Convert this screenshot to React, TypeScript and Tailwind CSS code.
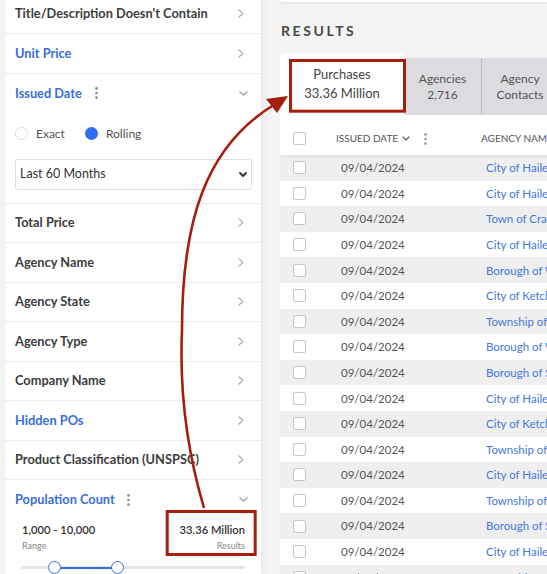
import React from "react";

function ChevronRight() {
  return (
    <svg width="6" height="9" viewBox="0 0 6 9" className="shrink-0">
      <path d="M1 1 L4.8 4.5 L1 8" fill="none" stroke="#b3b3b3" strokeWidth="1.4" strokeLinecap="round" strokeLinejoin="round" />
    </svg>
  );
}

function ChevronDownThin() {
  return (
    <svg width="9" height="5" viewBox="0 0 9 5" className="shrink-0">
      <path d="M0.8 0.8 L4.5 4.2 L8.2 0.8" fill="none" stroke="#a0a0a0" strokeWidth="1.2" strokeLinecap="round" strokeLinejoin="round" />
    </svg>
  );
}

function ChevronDownBold() {
  return (
    <svg width="8" height="5" viewBox="0 0 8 5" className="shrink-0">
      <path d="M1 1 L4 4 L7 1" fill="none" stroke="#333" strokeWidth="1.9" strokeLinecap="round" strokeLinejoin="round" />
    </svg>
  );
}

function Kebab({ color = "#8a8a8a" }: { color?: string }) {
  return (
    <svg width="3" height="12" viewBox="0 0 3 12" className="shrink-0">
      <circle cx="1.5" cy="1.4" r="1.3" fill={color} />
      <circle cx="1.5" cy="6" r="1.3" fill={color} />
      <circle cx="1.5" cy="10.6" r="1.3" fill={color} />
    </svg>
  );
}

function FilterRow({ label, blue }: { label: string; blue?: boolean }) {
  return (
    <div className="h-[39.5px] border-b border-[#ececec] flex items-center justify-between pl-[10px] pr-[17px]">
      <span className={blue ? "text-[12.8px] font-bold text-[#3a6ed8]" : "text-[12.8px] font-bold text-[#3d3d3d]"}>{label}</span>
      <ChevronRight />
    </div>
  );
}

function IssuedDate() {
  return (
    <div className="border-b border-[#ececec] pb-[13px]">
      <div className="h-[39.5px] flex items-center pl-[10px] pr-[13px]">
        <span className="text-[12.8px] font-bold text-[#3a6ed8]">Issued Date</span>
        <span className="ml-[13px] flex"><Kebab /></span>
        <span className="ml-auto flex"><ChevronDownThin /></span>
      </div>
      <div className="mt-[12px] h-[17px] flex items-center px-[10px] text-[12px] text-[#555]">
        <span className="w-[13px] h-[13px] rounded-full border border-[#dcdcdc] bg-white shrink-0" />
        <span className="ml-[8px]">Exact</span>
        <span className="ml-[20px] w-[13px] h-[13px] rounded-full bg-[#2f6df5] shrink-0" />
        <span className="ml-[8px]">Rolling</span>
      </div>
      <div className="mt-[16.5px] ml-[10px] w-[237px] h-[31px] border border-[#dedede] rounded-[3px] flex items-center justify-between pl-[4px] pr-[4px] text-[12.5px] text-[#333]">
        <span>Last 60 Months</span>
        <ChevronDownBold />
      </div>
    </div>
  );
}

function PopulationCount() {
  return (
    <div>
      <div className="h-[39.5px] flex items-center pl-[10px] pr-[13px]">
        <span className="text-[12.8px] font-bold text-[#3a6ed8]">Population Count</span>
        <span className="ml-[12px] flex"><Kebab /></span>
        <span className="ml-auto flex"><ChevronDownThin /></span>
      </div>
      <div className="flex justify-between pl-[17px] pr-[16px] mt-[2.5px]">
        <div className="flex flex-col">
          <span className="text-[11.2px] leading-[16px] font-semibold text-[#333]">1,000 - 10,000</span>
          <span className="mt-[2px] text-[9px] leading-[12px] text-[#888]">Range</span>
        </div>
        <div className="flex flex-col items-end">
          <span className="text-[11.2px] leading-[16px] font-semibold text-[#333]">33.36 Million</span>
          <span className="mt-[2px] text-[9px] leading-[12px] text-[#888]">Results</span>
        </div>
      </div>
      <div className="relative mx-[16px] mt-[9px] h-[13px]">
        <div className="absolute left-0 right-0 top-[5px] h-[3px] rounded-full bg-[#e6e6e6]" />
        <div className="absolute left-[33px] w-[63px] top-[5.5px] h-[2px] bg-[#3a6ed8]" />
        <div className="absolute left-[26.5px] top-0 w-[13px] h-[13px] rounded-full border-[1.5px] border-[#3a6ed8] bg-white" />
        <div className="absolute left-[89.5px] top-0 w-[13px] h-[13px] rounded-full border-[1.5px] border-[#3a6ed8] bg-white" />
      </div>
    </div>
  );
}

function Checkbox() {
  return <span className="block w-[13px] h-[13px] rounded-[2px] border border-[#c6c6c6] bg-white" />;
}

const names = [
  "City of Hailey",
  "City of Hailey",
  "Town of Crawford",
  "City of Hailey",
  "Borough of West Chester",
  "City of Ketchum",
  "Township of Lower Merion",
  "Borough of West Chester",
  "Borough of State College",
  "City of Hailey",
  "City of Ketchum",
  "Township of Lower Merion",
  "City of Hailey",
  "Township of Lower Merion",
  "Borough of State College",
  "City of Hailey",
  "Township of Lower Merion",
];

function Overlay() {
  const red = "#a51f0c";
  return (
    <svg className="absolute inset-0 pointer-events-none" width="547" height="574" viewBox="0 0 547 574">
      <rect x="290.5" y="60.5" width="114" height="50.7" fill="none" stroke={red} strokeWidth="3" />
      <rect x="167.2" y="511.5" width="88" height="43" fill="none" stroke={red} strokeWidth="3" />
      <path d="M204 508 Q178 420 182 330 C182 222 205 145 277 103" fill="none" stroke={red} strokeWidth="2.6" />
      <polygon points="288,96 266,99 277,113" fill={red} />
    </svg>
  );
}

export default function App() {
  return (
    <div className="relative flex w-[547px] h-[574px] overflow-hidden bg-[#f4f4f4] font-['Lato',sans-serif]">
      <aside className="ml-[5px] w-[256px] shrink-0 bg-white shadow-[2px_0_8px_rgba(0,0,0,0.05)] overflow-hidden">
        <div className="-mt-[5.5px]">
          <FilterRow label="Title/Description Doesn't Contain" />
          <FilterRow label="Unit Price" blue />
          <IssuedDate />
          <FilterRow label="Total Price" />
          <FilterRow label="Agency Name" />
          <FilterRow label="Agency State" />
          <FilterRow label="Agency Type" />
          <FilterRow label="Company Name" />
          <FilterRow label="Hidden POs" blue />
          <FilterRow label="Product Classification (UNSPSC)" />
          <PopulationCount />
        </div>
      </aside>
      <main className="ml-[19px] flex-1 min-w-0 overflow-hidden flex flex-col">
        <div className="ml-[1px] h-[1.5px] bg-white shadow-[0_1px_2px_rgba(0,0,0,0.1)] shrink-0" />
        <h2 className="mt-[20px] ml-[1px] text-[14px] leading-[17px] font-bold tracking-[2.6px] text-[#4a4a4a]">RESULTS</h2>
        <div className="mt-[14.5px] flex items-end h-[62px] shrink-0">
          <div className="w-[124px] h-[62px] bg-white rounded-t-[5px] flex flex-col items-center justify-center text-[13px] leading-[19px] text-[#444] shrink-0">
            <span>Purchases</span>
            <span>33.36 Million</span>
          </div>
          <div className="w-[78px] h-[57px] bg-[#dcdce0] border-r border-[#bdbdc2] flex flex-col items-center justify-center text-[12px] leading-[16px] text-[#555] shrink-0">
            <span>Agencies</span>
            <span>2,716</span>
          </div>
          <div className="w-[76px] h-[57px] bg-[#dcdce0] flex flex-col items-center justify-center text-[12px] leading-[16px] text-[#555] shrink-0">
            <span>Agency</span>
            <span>Contacts</span>
          </div>
        </div>
        <div className="bg-white w-[400px]">
          <div className="relative z-10 h-[40px] pt-[7px] flex items-center bg-white shadow-[0_2px_4px_rgba(0,0,0,0.06)] text-[10px] uppercase text-[#555] whitespace-nowrap">
            <div className="w-[56px] pl-[13px] shrink-0"><Checkbox /></div>
            <div className="w-[145px] shrink-0 flex items-center">
              <span>Issued Date</span>
              <span className="ml-[4px] flex">
                <svg width="8" height="5" viewBox="0 0 8 5"><path d="M1 1 L4 4 L7 1" fill="none" stroke="#666" strokeWidth="1.3" strokeLinecap="round" strokeLinejoin="round" /></svg>
              </span>
              <span className="ml-[14px] flex"><Kebab color="#9a9a9a" /></span>
            </div>
            <div className="shrink-0">Agency Name</div>
          </div>
          {names.map((n, i) => (
            <div key={i} className={i % 2 === 0 ? "h-[25.6px] flex items-center bg-[#efefef] whitespace-nowrap" : "h-[25.6px] flex items-center bg-white whitespace-nowrap"}>
              <div className="w-[56px] pl-[13px] shrink-0"><Checkbox /></div>
              <div className="w-[145px] pl-[5px] shrink-0 text-[11.5px] text-[#555]">09/04/2024</div>
              <div className="pl-[5px] shrink-0 text-[11.5px] text-[#4677dd]">{n}</div>
            </div>
          ))}
        </div>
      </main>
      <Overlay />
    </div>
  );
}
